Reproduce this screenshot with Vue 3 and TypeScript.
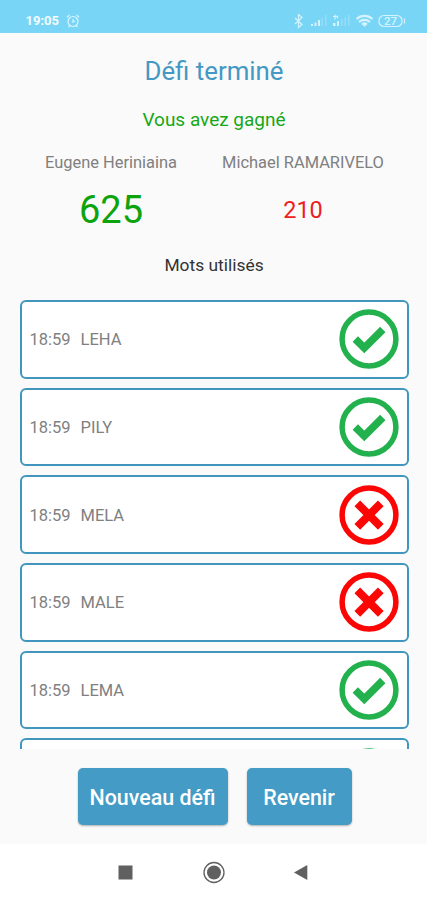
<script setup lang="ts">
interface Word {
  time: string
  text: string
  valid: boolean
}

const words: Word[] = [
  { time: '18:59', text: 'LEHA', valid: true },
  { time: '18:59', text: 'PILY', valid: true },
  { time: '18:59', text: 'MELA', valid: false },
  { time: '18:59', text: 'MALE', valid: false },
  { time: '18:59', text: 'LEMA', valid: true },
  { time: '', text: '', valid: true },
]
</script>

<template>
  <div class="screen">
    <header class="status">
      <span class="clock">19:05</span>
      <svg class="alarm" width="14" height="14" viewBox="0 0 14 14">
        <circle cx="7" cy="7.5" r="5" />
        <path d="M7 5v3l2-1M1 3.2 3.5 1M13 3.2 10.5 1M3.5 11.8 2.5 13M10.5 11.8l1 1.2" />
      </svg>
      <svg class="indicators" width="115" height="16" viewBox="0 0 115 16">
        <path class="line" d="m3 5 7 6.500-3.500 3V1.500l3.500 3L3 11" />
        <path class="fill" d="M19 13h2v-2h-2zM22.500 13h2V9.500h-2zM26 13h2V7h-2z" />
        <path class="fill dim" d="M29.500 13h1.500V4.500h-1.500zM33 13h1.500V2H33z" />
        <path class="fill" d="M41 13h2.500v-3H41zM45 13h2V8h-2z" />
        <path class="line" d="M43 1.500v5M45.500 2.500v3M41 3.500h4" />
        <path class="fill dim" d="M49 13h1.500V6H49zM52.500 13H54V4h-1.500zM56 13h1.500V2H56z" />
        <path class="wifi" d="M64.500 6a12 12 0 0 1 16 0M67 9a8 8 0 0 1 11 0M70 11.500a4 4 0 0 1 5 0" />
        <path class="fill" d="m70.500 11.500 2 2.500 2-2.500z" />
        <rect class="line" x="87" y="2.500" width="23" height="11" rx="5" />
        <path class="line" d="M112.500 5.500v5" />
        <text x="98.500" y="12" text-anchor="middle">27</text>
      </svg>
    </header>

    <main class="content">
      <h1 class="title">Défi terminé</h1>
      <p class="result">Vous avez gagné</p>
      <section class="players">
        <div class="player">
          <span class="name">Eugene Heriniaina</span>
          <span class="score win">625</span>
        </div>
        <div class="player">
          <span class="name">Michael RAMARIVELO</span>
          <span class="score loss">210</span>
        </div>
      </section>
      <h2 class="subtitle">Mots utilisés</h2>

      <ul class="words">
        <li v-for="(word, i) in words" :key="i" class="word">
          <span class="time">{{ word.time }}</span>
          <span class="text">{{ word.text }}</span>
          <svg class="mark" :class="{ bad: !word.valid }" width="60" height="60" viewBox="0 0 60 60">
            <circle cx="30" cy="30" r="26.900" />
            <path v-if="word.valid" class="tick" d="m16.300 30 9 9 18.500-18.500" />
            <path v-else class="cross" d="m18.300 18.300 23.500 23.500M41.800 18.300 18.300 41.800" />
          </svg>
        </li>
      </ul>

      <div class="actions">
        <button class="btn again" type="button">Nouveau défi</button>
        <button class="btn back" type="button">Revenir</button>
      </div>
    </main>

    <nav class="navbar">
      <svg width="16" height="24" viewBox="0 0 16 24"><rect x="1.500" y="4.500" width="14" height="14" /></svg>
      <svg width="24" height="24" viewBox="0 0 24 24">
        <circle cx="12" cy="11.500" r="10" fill="none" stroke="#606060" stroke-width="1.300" />
        <circle cx="12" cy="11.500" r="7" />
      </svg>
      <svg width="16" height="24" viewBox="0 0 16 24"><path d="M0 11.500 13.300 4v15z" /></svg>
    </nav>
  </div>
</template>

<style>
body {
  margin: 0;
}
</style>

<style scoped>
.screen {
  display: flex;
  flex-direction: column;
  width: 427px;
  height: 900px;
  overflow: hidden;
  background: #fafafa;
  font-family: Roboto, "Liberation Sans", sans-serif;
}
.status {
  display: flex;
  align-items: flex-start;
  box-sizing: border-box;
  height: 33px;
  padding: 13px 20px 0 25.500px;
  background: #79d5f6;
  color: #f2fcff;
}
.clock {
  width: 33px;
  font-size: 13px;
  line-height: 16px;
  font-weight: 700;
}
.alarm {
  margin: 1px 0 0 7px;
  fill: none;
  stroke: #d9f5ff;
  stroke-width: 1.2;
}
.indicators {
  margin-left: auto;
}
.line {
  fill: none;
  stroke: #d5f3fe;
  stroke-width: 1.2;
}
.fill {
  fill: #d5f3fe;
}
.dim {
  opacity: 0.3;
}
.wifi {
  fill: none;
  stroke: #d5f3fe;
  stroke-width: 2.200;
}
.indicators text {
  fill: #d5f3fe;
  font-size: 11.500px;
  font-weight: 500;
}
.content {
  display: flex;
  flex-direction: column;
  align-items: center;
  height: 811px;
  padding-left: 1px;
}
.title,
.result,
.subtitle {
  margin: 0;
  font-weight: 400;
}
.title {
  margin-top: 22px;
  font-size: 25.800px;
  line-height: 32px;
  color: #4398c4;
}
.result {
  margin-top: 21px;
  font-size: 19px;
  line-height: 24px;
  color: #16a716;
}
.players {
  display: flex;
  width: 384px;
  margin: 20px 14px 0 0;
}
.player {
  display: flex;
  flex: 1;
  flex-direction: column;
  align-items: center;
}
.name {
  font-size: 16.450px;
  line-height: 22px;
  color: #808080;
  white-space: nowrap;
}
.score {
  margin-top: 11px;
  line-height: 50px;
}
.win {
  font-size: 38px;
  color: #0da30d;
}
.loss {
  font-size: 23.500px;
  color: #ee1c25;
}
.subtitle {
  margin-top: 18px;
  font-size: 17.400px;
  line-height: 24px;
  color: #333;
}
.words {
  display: flex;
  flex: none;
  flex-direction: column;
  gap: 9.200px;
  box-sizing: border-box;
  width: 389px;
  height: 449px;
  margin: 23px 0 0;
  padding: 0;
  overflow: hidden;
  list-style: none;
}
.word {
  display: flex;
  flex: none;
  align-items: center;
  box-sizing: border-box;
  height: 78.500px;
  padding: 0 7.500px 0 8px;
  border: 2px solid #4096bd;
  border-radius: 6px;
  background: #fff;
  font-size: 16.500px;
  color: #808080;
}
.time {
  width: 51px;
}
.time,
.text {
  padding-top: 1px;
}
.mark {
  margin-left: auto;
  fill: none;
  stroke: #22b14c;
}
.bad {
  stroke: #fb0505;
}
.mark circle {
  stroke-width: 5.500;
}
.tick {
  stroke-width: 7.500;
}
.cross {
  stroke-width: 8;
}
.actions {
  display: flex;
  justify-content: center;
  gap: 19px;
  margin: 19px 0 0 1px;
}
.btn {
  height: 57px;
  padding: 1px 0 0;
  border: 0;
  border-radius: 5px;
  background: #439bc6;
  box-shadow: 0 1px 2px rgba(0, 0, 0, 0.3);
  color: #fff;
  font: 500 21.400px Roboto, "Liberation Sans", sans-serif;
}
.again {
  width: 150px;
}
.back {
  width: 105px;
}
.navbar {
  display: flex;
  flex: 1;
  align-items: center;
  justify-content: space-between;
  padding: 2px 117px 0;
  background: #fff;
}
.navbar svg {
  fill: #606060;
}
</style>
